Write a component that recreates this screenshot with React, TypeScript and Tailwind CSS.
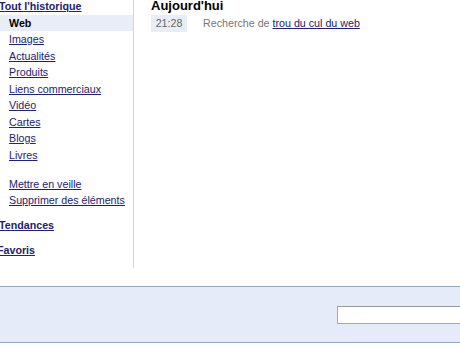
import React from 'react';

const linkCls = 'text-[#22226e] underline';

const subItems = ['Images', 'Actualités', 'Produits', 'Liens commerciaux', 'Vidéo', 'Cartes', 'Blogs', 'Livres'];

export default function App() {
    return (
        <div className="w-[460px] h-[347px] overflow-hidden bg-white text-[10.7px]" style={{ fontFamily: '"Liberation Sans", Arial, sans-serif' }}>
            <div className="flex h-[286px]">
                {/* sidebar */}
                <div className="w-[134px] shrink-0 h-[270px] border-r border-[#d4d4d4] -mt-[2px] whitespace-nowrap">
                    <div className="leading-[16.5px]">
                        <a className={`${linkCls} font-bold block -ml-[1px]`}>Tout l'historique</a>
                        <div className="bg-[#e8eef8] pl-[9px] font-bold text-black">Web</div>
                        {subItems.map((s) => (
                            <div key={s} className="pl-[9px]">
                                <a className={linkCls}>{s}</a>
                            </div>
                        ))}
                        <div className="mt-[12.5px] pl-[9px]">
                            <a className={linkCls}>Mettre en veille</a>
                        </div>
                        <div className="pl-[9px]">
                            <a className={linkCls}>Supprimer des éléments</a>
                        </div>
                        <div className="mt-[8.5px] -ml-[1px]">
                            <a className={`${linkCls} font-bold`}>Tendances</a>
                        </div>
                        <div className="mt-[8.5px] -ml-[3px]">
                            <a className={`${linkCls} font-bold`}>Favoris</a>
                        </div>
                    </div>
                </div>
                {/* main */}
                <div className="pl-[17px] -mt-[3px]">
                    <div className="text-[13px] font-bold text-black leading-[17px]">Aujourd'hui</div>
                    <div className="flex items-center mt-[1px] whitespace-nowrap">
                        <span className="bg-[#e8eef8] text-[#666] w-[36px] h-[17px] leading-[17px] text-center">21:28</span>
                        <span className="ml-[16px] text-[#777]">Recherche de <a className={linkCls}>trou du cul du web</a></span>
                    </div>
                </div>
            </div>
            {/* footer */}
            <div className="h-[57px] bg-[#e5ebf8] border-t border-b border-[#9aa6bd] flex items-center justify-end">
                <input className="w-[128px] h-[18px] mr-[-5px] bg-white border border-[#a9a9a9] border-t-[#9a9a9a]" />
            </div>
        </div>
    );
}
